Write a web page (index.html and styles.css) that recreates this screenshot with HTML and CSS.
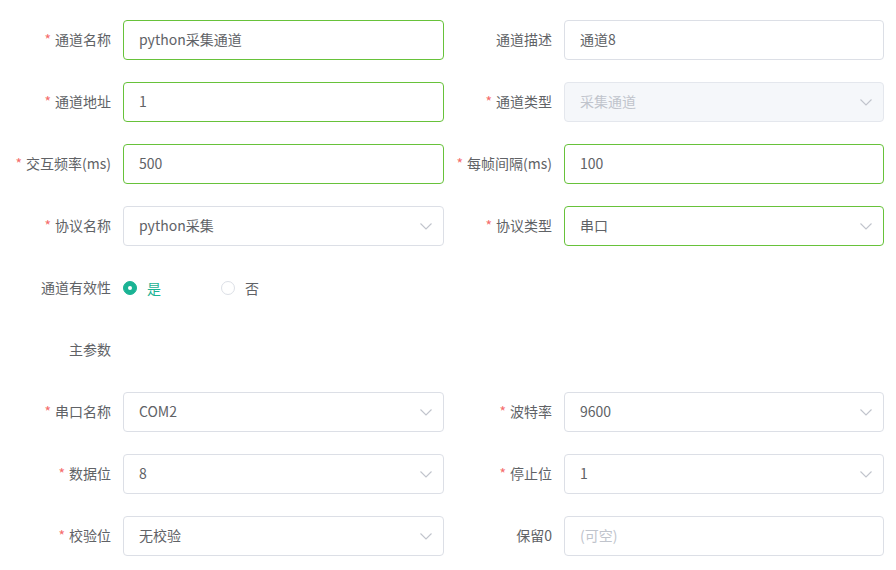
FILE: index.html
```html
<!DOCTYPE html>
<html lang="zh">
<head>
<meta charset="utf-8">
<link rel="stylesheet" href="styles.css">
</head>
<body>
<form class="form">
  <label class="label req">通道名称</label>
  <div class="input valid"><span class="val">python采集通道</span></div>
  <label class="label">通道描述</label>
  <div class="input"><span class="val">通道8</span></div>

  <label class="label req">通道地址</label>
  <div class="input valid"><span class="val">1</span></div>
  <label class="label req">通道类型</label>
  <div class="input select disabled"><span class="val">采集通道</span><svg class="arrow" viewBox="0 0 12 7"><path d="M0.5 0.5 L6 6 L11.5 0.5"/></svg></div>

  <label class="label req">交互频率(ms)</label>
  <div class="input valid"><span class="val">500</span></div>
  <label class="label req">每帧间隔(ms)</label>
  <div class="input valid"><span class="val">100</span></div>

  <label class="label req">协议名称</label>
  <div class="input select"><span class="val">python采集</span><svg class="arrow" viewBox="0 0 12 7"><path d="M0.5 0.5 L6 6 L11.5 0.5"/></svg></div>
  <label class="label req">协议类型</label>
  <div class="input select valid"><span class="val">串口</span><svg class="arrow" viewBox="0 0 12 7"><path d="M0.5 0.5 L6 6 L11.5 0.5"/></svg></div>

  <label class="label">通道有效性</label>
  <div class="radios">
    <span class="radio checked"><span class="dot"></span><span class="rtext">是</span></span>
    <span class="radio"><span class="dot"></span><span class="rtext">否</span></span>
  </div>
  <div class="spacer"></div>

  <label class="label">主参数</label>
  <div class="empty"></div>
  <div class="spacer"></div>

  <label class="label req">串口名称</label>
  <div class="input select"><span class="val">COM2</span><svg class="arrow" viewBox="0 0 12 7"><path d="M0.5 0.5 L6 6 L11.5 0.5"/></svg></div>
  <label class="label req">波特率</label>
  <div class="input select"><span class="val">9600</span><svg class="arrow" viewBox="0 0 12 7"><path d="M0.5 0.5 L6 6 L11.5 0.5"/></svg></div>

  <label class="label req">数据位</label>
  <div class="input select"><span class="val">8</span><svg class="arrow" viewBox="0 0 12 7"><path d="M0.5 0.5 L6 6 L11.5 0.5"/></svg></div>
  <label class="label req">停止位</label>
  <div class="input select"><span class="val">1</span><svg class="arrow" viewBox="0 0 12 7"><path d="M0.5 0.5 L6 6 L11.5 0.5"/></svg></div>

  <label class="label req">校验位</label>
  <div class="input select"><span class="val">无校验</span><svg class="arrow" viewBox="0 0 12 7"><path d="M0.5 0.5 L6 6 L11.5 0.5"/></svg></div>
  <label class="label">保留0</label>
  <div class="input"><span class="val placeholder">(可空)</span></div>
</form>
</body>
</html>
```
FILE: styles.css
```css
html, body {
  margin: 0;
  padding: 0;
  background: #ffffff;
}
body {
  font-family: "Noto Sans CJK SC", "Noto Sans", sans-serif;
  font-size: 14px;
  line-height: 20px;
  color: #606266;
  width: 896px;
  height: 570px;
  overflow: hidden;
}
.form {
  display: grid;
  grid-template-columns: 123px 321px 120px 320px;
  grid-auto-rows: 40px;
  row-gap: 22px;
  padding-top: 20px;
}
.label {
  display: flex;
  align-items: center;
  justify-content: flex-end;
  padding-right: 12px;
  padding-bottom: 2px;
  color: #606266;
  font-size: 14px;
  white-space: nowrap;
}
.label.req::before {
  content: "*";
  color: #f56c6c;
  margin-right: 4px;
}
.input {
  box-sizing: border-box;
  height: 40px;
  border: 1px solid #dcdfe6;
  border-radius: 4px;
  display: flex;
  align-items: center;
  padding: 0 15px 2px;
  color: #606266;
  background: #fff;
}
.input.valid {
  border-color: #67c23a;
}
.input.disabled {
  background: #f5f7fa;
  border-color: #e4e7ed;
  color: #c0c4cc;
}
.val {
  flex: 1;
  white-space: nowrap;
}
.placeholder {
  color: #c0c4cc;
}
.arrow {
  width: 12px;
  height: 7px;
  margin-right: -4px;
  margin-top: 2px;
  fill: none;
  stroke: #c0c4cc;
  stroke-width: 1.1;
}
.radios {
  display: flex;
  align-items: center;
}
.radio {
  display: inline-flex;
  align-items: center;
  margin-right: 60px;
  color: #606266;
}
.dot {
  box-sizing: border-box;
  width: 14px;
  height: 14px;
  border-radius: 50%;
  border: 1px solid #dcdfe6;
  background: #fff;
  position: relative;
}
.radio.checked .dot {
  border-color: #1ab394;
  background: #1ab394;
}
.radio.checked .dot::after {
  content: "";
  position: absolute;
  width: 4px;
  height: 4px;
  border-radius: 50%;
  background: #fff;
  left: 50%;
  top: 50%;
  transform: translate(-50%, -50%);
}
.radio.checked .rtext {
  color: #1ab394;
}
.rtext {
  padding-left: 10px;
}
.spacer {
  grid-column: span 2;
}
```
